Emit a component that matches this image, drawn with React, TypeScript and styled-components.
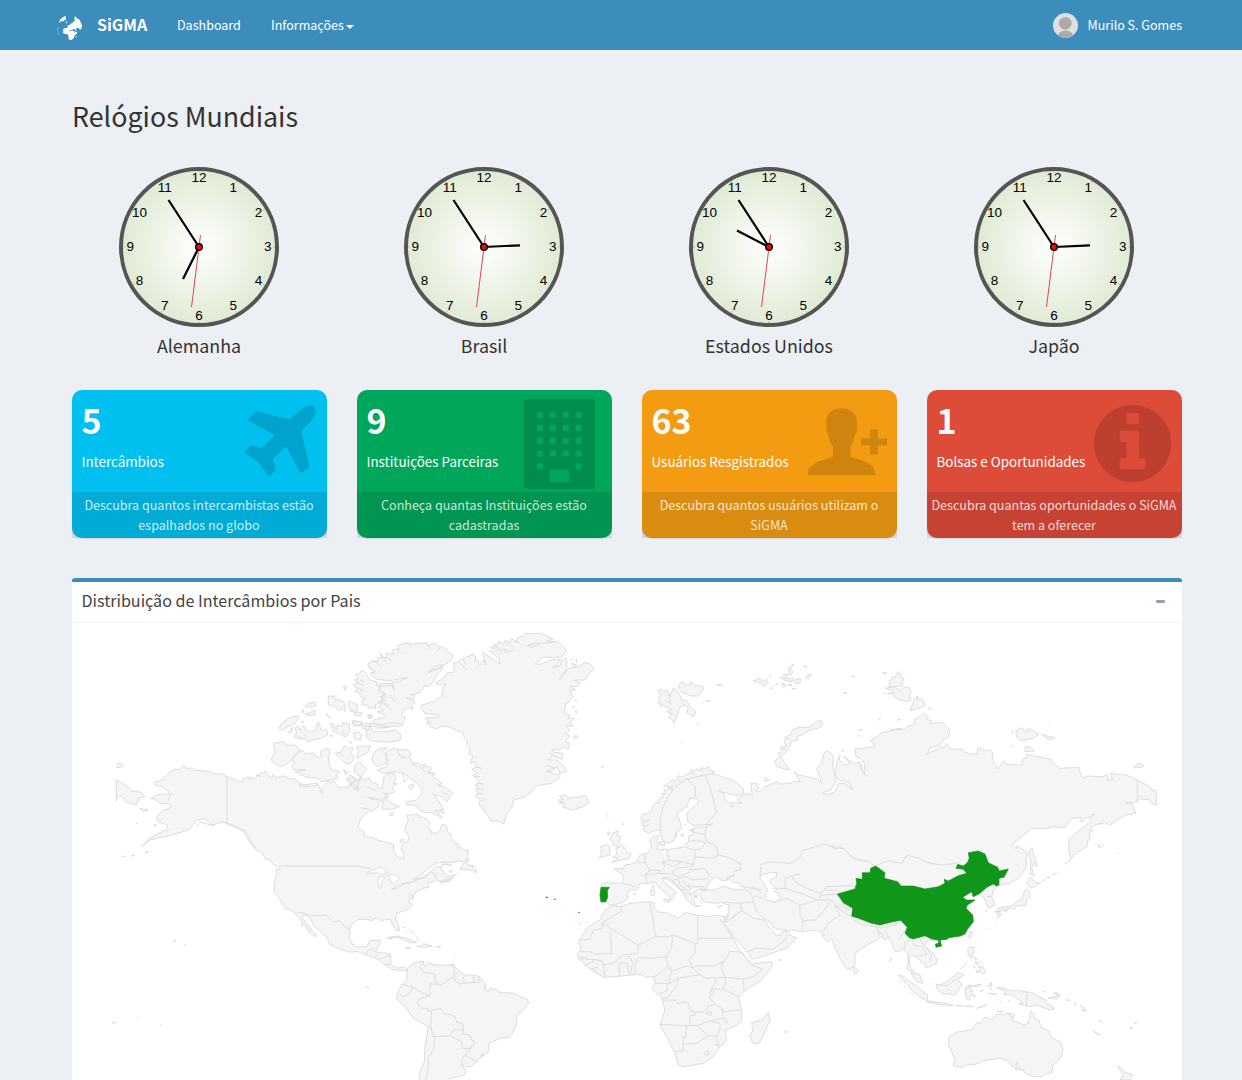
import React from 'react';
import styled, { createGlobalStyle } from 'styled-components';

const GlobalStyle = createGlobalStyle`
  *, *::before, *::after { box-sizing: border-box; }
  html, body { margin: 0; padding: 0; }
  body {
    background: #ecf0f5;
    color: #333;
    font-family: "Source Sans Pro", "Noto Sans CJK JP", "Noto Sans CJK SC", sans-serif;
    overflow: hidden;
  }
`;

const Page = styled.div`
  height: 1080px;
  overflow: hidden;
`;

const Navbar = styled.header`
  display: flex;
  align-items: center;
  height: 50px;
  padding: 0 60px 0 57px;
  background: #3c8dbc;
  color: #fff;
`;

const Brand = styled.a`
  display: flex;
  align-items: center;
  gap: 14px;
  width: 120px;
  font-size: 16px;
  line-height: 20px;
  font-weight: 700;
`;

const BrandName = styled.span`
  padding-bottom: 2px;
`;

const NavLink = styled.a<{ $width?: number }>`
  display: flex;
  align-items: center;
  gap: 2px;
  width: ${(p) => (p.$width ? `${p.$width}px` : 'auto')};
  font-size: 12.54px;
  line-height: 20px;
  white-space: nowrap;
`;

const Caret = styled.span`
  margin-top: 3px;
  border-top: 4px solid #fff;
  border-left: 4px solid transparent;
  border-right: 4px solid transparent;
`;

const UserLink = styled(NavLink)`
  gap: 10px;
  margin-left: auto;
`;

const Content = styled.main`
  padding: 0 60px 0 72px;
`;

const PageTitle = styled.h1`
  margin: 0;
  padding: 49px 0 34px;
  font-size: 26.8px;
  line-height: 34px;
  font-weight: 400;
`;

const Columns = styled.section`
  display: grid;
  grid-template-columns: repeat(4, 1fr);
  gap: 30px;
`;

const ClockCell = styled.figure`
  display: flex;
  flex-direction: column;
  align-items: center;
  margin: 0;
  height: 223px;
`;

const ClockFace = styled.svg`
  display: block;
  font-family: "Liberation Sans", Arial, sans-serif;
  font-size: 13.5px;
  text-anchor: middle;
`;

const ClockLabel = styled.figcaption`
  margin-top: 7px;
  padding-right: 1px;
  font-size: 17.85px;
  line-height: 22px;
`;

const SmallBox = styled.article<{ $color: string }>`
  display: flex;
  flex-direction: column;
  height: 148px;
  border-radius: 10px;
  background: ${(p) => p.$color};
  color: #fff;
  box-shadow: 0 1px 1px rgba(0, 0, 0, 0.1);
`;

const BoxInner = styled.div`
  display: flex;
  justify-content: space-between;
  height: 102px;
  padding: 9px 0 0 9.5px;
`;

const BoxFigures = styled.div`
  white-space: nowrap;
`;

const BoxNumber = styled.h3`
  margin: 0 0 9px;
  font-size: 34px;
  line-height: 42px;
  font-weight: 700;
`;

const BoxLabel = styled.p`
  margin: 0;
  font-size: 13.42px;
  line-height: 22px;
`;

const BoxIcon = styled.svg<{ $top: number; $right: number }>`
  flex: none;
  margin-top: ${(p) => p.$top}px;
  margin-right: ${(p) => p.$right}px;
  margin-left: -20px;
  fill: rgba(0, 0, 0, 0.15);
  overflow: visible;
`;

const BoxFooter = styled.a`
  display: block;
  height: 46px;
  padding: 3px 1px 3px 0;
  background: rgba(0, 0, 0, 0.1);
  color: rgba(255, 255, 255, 0.8);
  font-size: 12.54px;
  line-height: 20px;
  text-align: center;
`;

const Panel = styled.section`
  margin-top: 40px;
  border-top: 4px solid #3c8dbc;
  border-radius: 3px 3px 0 0;
  background: #fff;
`;

const PanelHeader = styled.div`
  display: flex;
  align-items: center;
  justify-content: space-between;
  height: 41px;
  padding: 0 17px 2px 9.5px;
  border-bottom: 1px solid #f4f4f4;
  color: #444;
`;

const PanelTitle = styled.h3`
  margin: 0;
  padding-bottom: 2px;
  font-size: 16.1px;
  line-height: 20px;
  font-weight: 400;
`;

const CollapseMark = styled.span`
  width: 9px;
  height: 3px;
  border-radius: 1px;
  background: #97a0b3;
`;

const PanelBody = styled.div`
  padding: 10px 0 0 40px;
`;

const MapCanvas = styled.svg`
  display: block;
  stroke-linejoin: round;
`;

const LogoMark = styled.svg`
  margin-top: 5px;
`;

const Logo = () => (
  <LogoMark width="26" height="26" viewBox="51 45 78 78" fill="#fff">
    <path d="M105 48l7 8 5 1 6 11 3 10-2 8-4 3-5-6-5 1-2 5 3 5-5-3-4-5-5 3 2 6-6-5-5 1-5-2-6 4-6 1-2-6 6-4 8-1-1-6 7-2 2-4 6-1 4-6 4-2-2-6z" />
    <path d="M69 94l9-5 9 1 5 4 8-1 8 3 4-1-2 7-6 4-3 8-6 6-7-1-3-5 1-7-4-4-9-2-5-3z" />
    <path d="M57 66l4-8 5-4 8-6 4 3-1 5 2 5-6-1-5 5-4-3-7 7zM77 67l4-3 1 4-3 2zM106 112l3-5 1 2-2 4z" />
    <path d="M54 80l-1 10 2 9 4 6" fill="none" stroke="#fff" strokeOpacity=".5" strokeWidth="2" />
  </LogoMark>
);

const Avatar = () => (
  <svg width="25" height="25" viewBox="0 0 25 25">
    <clipPath id="avatar-clip"><circle cx="12.5" cy="12.5" r="12.5" /></clipPath>
    <g clipPath="url(#avatar-clip)">
      <rect width="25" height="25" fill="#e0e0e0" />
      <circle cx="12.3" cy="10.3" r="6.3" fill="#aaa" />
      <ellipse cx="12.5" cy="24" rx="8" ry="6.6" fill="#aaa" />
    </g>
  </svg>
);

const numerals = Array.from({ length: 12 }, (_, i) => i + 1);

function Clock({ name, hour }: { name: string; hour: [number, number] }) {
  return (
    <ClockCell>
      <ClockFace width="161" height="160" viewBox="-80 -80 161 160">
        <defs>
          <radialGradient id="dial">
            <stop offset="0" stopColor="#fff" />
            <stop offset="1" stopColor="#e0ead4" />
          </radialGradient>
        </defs>
        <circle r="78" fill="url(#dial)" stroke="#555" strokeWidth="4" />
        {numerals.map((n) => {
          const a = (n * Math.PI) / 6;
          return (
            <React.Fragment key={n}>
              <line
                x1={Math.sin(a) * 74} y1={-Math.cos(a) * 74}
                x2={Math.sin(a) * 76} y2={-Math.cos(a) * 76}
                stroke="#a9c48c" strokeWidth="1"
              />
              <text x={Math.sin(a) * 68.7} y={-Math.cos(a) * 68.7 + 4}>{n}</text>
            </React.Fragment>
          );
        })}
        <line x2={hour[0]} y2={hour[1]} stroke="#000" strokeWidth="2.2" />
        <line x2="-30.5" y2="-47" stroke="#000" strokeWidth="2.2" />
        <line x1="1.5" y1="-12" x2="-7.5" y2="60" stroke="#e04848" strokeWidth="1" />
        <circle r="3.3" fill="#f00" stroke="#000" strokeWidth="1.4" />
      </ClockFace>
      <ClockLabel>{name}</ClockLabel>
    </ClockCell>
  );
}

const PlaneIcon = () => (
  <BoxIcon width="71" height="71" viewBox="190 126 1412 1412" $top={6} $right={11}>
    <path d="M1568 160q44 52 12 148t-108 172l-161 161 160 696q5 19-12 33l-128 96q-7 6-19 6-4 0-7-1-15-3-21-16l-279-508-259 259 53 194q5 17-8 31l-96 96q-9 9-23 9h-2q-15-2-24-13l-189-252-252-189q-11-7-13-23-1-13 9-25l96-97q9-9 23-9 6 0 8 1l194 53 259-259-508-279q-14-8-17-24-2-16 9-27l128-128q14-13 30-8l665 159 160-160q76-76 172-108t148 12z" />
  </BoxIcon>
);

const square = (x: number, y: number, w = 128, h = 128) =>
  `M${x + 32} ${y}q-32 0-32 32v${h - 64}q0 32 32 32h${w - 64}q32 0 32-32v-${h - 64}q0-32-32-32z`;

const windows = [256, 512, 768, 1024, 1280].flatMap((y) =>
  [256, 512, 768, 1024].filter((x) => y < 1280 || x === 256 || x === 1024).map((x) => square(x, y)),
);

const BuildingIcon = () => (
  <BoxIcon width="70.7" height="90" viewBox="0 0 1408 1792" $top={0} $right={17}>
    <path
      fillRule="evenodd"
      d={`M64 0h1280q64 0 64 64v1664q0 64-64 64H64q-64 0-64-64V64Q0 0 64 0z${windows.join('')}${square(512, 1408, 384, 256)}`}
    />
  </BoxIcon>
);

const PersonAddIcon = () => (
  <BoxIcon width="79" height="68" viewBox="0 0 79 68" $top={9.2} $right={10.2}>
    <path d="M33.4.3C42 .3 49 5 49 13.500c0 2-.4 4 .1 6.500.2 2.500-.5 4.500-1.700 5.600-1 6.200-3 10.500-4.900 13.400v9.500c7 2.800 15.500 4.500 21 9 3.500 2.800 3.700 5 3.700 9.700H0c0-4.700.2-6.900 3.700-9.700 5.500-4.500 14.300-6.200 21.300-9V39c-1.900-2.900-4.200-7.200-5.200-13.400-1.100-1.100-1.600-3.100-1.400-5.600.3-2.500-.1-4.500-.1-6.500C18.300 5 25 .3 33.400.3z" />
    <path d="M62.200 21.500h7.600v9H79v7h-9.200v9h-7.600v-9H53.100v-7h9.100z" />
  </BoxIcon>
);

const InfoIcon = () => (
  <BoxIcon width="77.200" height="77.200" viewBox="128 128 1536 1536" $top={6} $right={11}>
    <path d="M1152 1376v-160q0-14-9-23t-23-9h-96v-512q0-14-9-23t-23-9h-320q-14 0-23 9t-9 23v160q0 14 9 23t23 9h96v320h-96q-14 0-23 9t-9 23v160q0 14 9 23t23 9h448q14 0 23-9t9-23zm-128-896v-160q0-14-9-23t-23-9h-192q-14 0-23 9t-9 23v160q0 14 9 23t23 9h192q14 0 23-9t9-23zm640 416q0 209-103 385.500t-279.500 279.500-385.500 103-385.500-103-279.500-279.500-103-385.500 103-385.500 279.500-279.500 385.500-103 385.500 103 279.500 279.500 103 385.500z" />
  </BoxIcon>
);

/* Map outlines are kept per survey sheet; each sheet has its own origin and unit. */
const sheets: Record<string, [number, number, number]> = {
  P: [0, 0, 1],
  A: [100, 570, 3],
  B: [340, 620, 3],
  C: [590, 640, 3],
  D: [850, 650, 3],
  E: [220, 850, 3],
  F: [540, 840, 3],
  G: [830, 840, 3],
};

function trace(source: string, close: boolean): string {
  let sheet = sheets.P;
  return source
    .split('|')
    .map((part) => {
      const points: string[] = [];
      part.trim().split(/\s+/).forEach((token) => {
        if (sheets[token]) {
          sheet = sheets[token];
          return;
        }
        const [x, y] = token.split(',').map(Number);
        points.push(`${(sheet[0] + x / sheet[2]).toFixed(1)} ${(sheet[1] + y / sheet[2]).toFixed(1)}`);
      });
      return `M${points.join('L')}${close ? 'Z' : ''}`;
    })
    .join('');
}

const land = `
A 190,627 205,610 225,597 240,598 250,586 260,595 275,594 285,601 300,602 325,604 345,611 365,611 381,620 400,627 420,635 428,634 430,622 437,629 443,620 448,629 456,620 462,626 470,620 472,612 478,618 482,608 490,610 495,603 505,617 515,624 520,613 530,624 550,617 565,625 585,627 600,640 598,650 635,648 645,640 655,643 660,655 668,672 658,662 672,650 685,632 692,638 700,632 715,652 745,652 755,640 762,645 768,660 775,635 785,620
B 25,500 30,490 45,510 52,500 60,475 72,480 88,473 97,490 108,488 118,508 127,503 130,490 132,470 140,462 162,460 168,475 160,490 172,492 155,500 165,515 150,522 130,520 148,530 124,534 130,540 118,545 115,560 100,570 85,575 62,595 54,625 70,632 75,650 95,652 115,661 160,673 162,697 175,713 190,715 192,703 183,690 186,672 203,665 208,650 195,635 198,615 205,602 200,585 215,585 230,583 245,592 262,598 270,612 262,620 275,632 273,640 290,638 300,632 305,615 312,612 322,625 325,640 335,645 332,652 345,670 358,672 350,680 365,682 372,690 385,690 382,710
E 735,37 715,33 690,38 655,37 625,55 600,78 580,88 600,85 625,72 645,52 670,48 660,58 672,65 680,80 700,76 710,72 690,88 665,98 657,90 645,92 625,100 626,112 612,114 600,121 588,125 580,140 578,150 574,133 566,135 571,148 565,155 578,165 570,175 550,183 530,190 526,205 533,222 540,240 530,242 518,225 513,210 500,207 485,212 470,203 455,212 440,208 415,208 400,218 390,230 388,260 395,280 410,290 440,290 450,272 482,270 475,290 465,305 490,308 512,312 512,340 520,350 535,355 550,350 562,358 560,366 550,360 535,362 515,357 495,345 475,328 460,322 437,315 415,305 388,306 355,295 328,283 322,263 300,245 285,230 272,208 260,198 250,194 247,205 265,225 275,240 290,255 285,260 265,243 258,228 243,224 246,218 238,205 225,190 212,180 195,175 180,148 162,125 163,95 170,70 166,58 182,60 172,48 160,45 150,30 135,26 128,10 110,0
P 250,843 244,832 233,825 222,822 213,825 205,819 197,820 190,829 182,832 168,836 150,840 141,847 150,838 163,831
A 205,780 200,765 175,755 170,740 190,720 208,717 213,708 205,702 180,700 165,688 152,685 170,675 188,671 205,675 207,665 185,650 165,645 162,637 178,632
| E 562,358 575,343 585,338 610,333 612,345 615,350 628,335 633,342 650,345 690,345 705,350 720,365 735,375 760,375 778,380 795,400 798,415 790,415 805,425 810,415 835,420 840,430 850,427 880,430 905,442 922,448 926,460 908,482 890,495 888,525 875,555 865,562 840,565 807,580 805,605 780,625 765,640 755,650 735,648 725,645 738,662 735,675 690,685 685,710 600,710 597,670 613,635 615,590 625,530 580,505 555,470 530,448 530,435 537,420 545,405 560,390 560,370
| B 340,130 355,125 370,115 400,103 408,110 405,125 415,122 418,137 430,120 438,134 428,97 455,115 480,132 476,115 448,93 468,95 475,105 485,100 470,90 450,82 468,80 480,88 460,75 478,72 475,65 492,72 495,60 510,68 515,56 530,66 530,55 550,47 555,40 575,41 600,40 620,48 640,58 620,63 655,65 680,92 665,112 640,112 610,112 585,132 600,133 640,118 660,120 650,135 637,142 660,137 665,120 680,115 680,145 658,180 685,145 715,140 735,127 750,132 763,147 745,162 735,180 700,181 722,190 710,200 690,198 708,210 690,210 698,230 685,248 678,250 672,280 690,285 685,295 703,295 690,305 700,320 680,315 688,332 675,340 690,348 675,365 690,370 685,388 670,380 655,390 635,390 640,397 670,400 665,418 640,405 625,420 650,420 670,435 680,455 660,460 650,440 620,455 660,465 660,472 635,490 590,497 575,515 555,530 520,540 515,565 500,580 495,600 490,613 482,604 475,607 470,601 455,606 445,590 430,570 425,558 417,556 420,540 405,528 418,520 406,510 415,500 405,495 418,485 398,465 412,460 395,448 412,440 405,425 390,430 398,410 385,400 390,385 380,375 382,362 373,355 370,340 360,335 325,320 305,318 290,328 270,320 260,305 275,310 255,295 297,290 297,284 255,280 242,262 245,255 280,245 305,230 310,200 318,193 290,193 288,188 310,175 320,160 343,155 343,140
| B 655,548 670,547 655,540 670,538 658,528 678,525 685,535 700,530 718,532 735,525 747,545 735,558 700,570 670,562 675,552
| B 83,133 100,122 115,124 112,112 125,115 120,98 132,112 140,115 140,100 158,102 160,88 175,88 172,78 185,72 205,68 220,73 238,68 250,72 262,66 260,75 285,70 300,82 310,80 322,92 340,105 335,118 325,128 300,140 265,158 310,140 305,150 290,165 280,185 265,200 255,195 240,218 210,225 225,225 220,240 200,233 225,245 215,255 220,268 205,262 190,270 185,285 197,293 185,318 150,320 115,318 90,320 100,300 135,290 130,282 112,275 130,272 115,260 125,250 115,245 135,240 120,230 135,225 118,215 118,192 150,190 165,212 155,188 175,185 205,172 150,182 110,178 90,160 108,155 88,145
| B 65,150 78,160 83,172 90,180 112,187 110,195 122,200 118,215 135,220 140,230 125,235 130,243 105,255 108,265 85,262 80,255 65,255 68,240 78,235 60,230 60,218 45,215 52,205 40,195 55,190 43,180 55,175 45,165 60,160
| B 75,318 90,320 100,335 140,335 165,330 185,345 180,360 145,367 90,362 78,350 80,335
| B 130,383 140,383 130,395 140,410 140,430 112,440 97,425 98,405 110,390
| B 140,395 160,385 172,388 180,410 200,415 175,402 172,388 205,390 215,405 205,410 220,425 218,432 235,428 240,436 255,432 248,442 262,438 275,445 265,455 285,460 280,470 292,478 305,490 295,495 310,500 320,505 338,520 330,530 320,545 305,530 285,525 280,520 300,550 312,570 300,570 315,580 285,570 305,590 310,595 280,580 245,575 225,555 200,555 197,545 230,540 245,520 245,505 230,490 205,470 190,460 165,455 130,460 112,450 140,440 145,425 138,410
| B 205,498 220,492 222,502 210,507 | B 150,578 160,577 158,587 149,586 | B 125,568 128,550 137,530 150,548 178,560 160,567 | B 180,660 190,658 190,664 182,667
| B 360,748 375,725 387,715 382,732 400,740 395,735 410,750 403,758 410,755 395,750 378,748 | E 677,88 700,82 690,93 665,98 657,95 | E 690,60 697,65 692,68 | E 665,43 680,42 695,46
| A 520,520 550,515 560,525 585,525 600,540 575,570 555,585 540,590 512,570 525,545
| A 575,570 590,550 605,540 620,552 640,548 655,565 665,560 660,545 680,535 690,540 685,565 690,595 700,600 720,605 708,615 715,625 665,635 650,625 620,622 605,615 585,605 618,600 580,598 575,585 585,575
| A 580,500 590,490 585,475 595,468 598,480 610,466 622,483 635,485 650,480 650,460 657,457 663,480 680,480 683,495 660,505 640,510 625,517 615,505 600,507
| A 537,475 545,460 560,450 575,440 597,438 593,448 585,460 560,472 545,482 | A 565,487 580,470 572,490
| A 615,410 625,400 645,397 648,408 620,412 | A 605,420 612,420 610,428 | A 615,430 625,430 645,420 645,435 620,437
| A 685,378 703,378 705,390 718,388 735,400 735,425 725,415 720,422 700,405 690,408 685,400 | A 745,395 755,395 772,405 772,422 752,425 | A 762,428 785,428 783,437 765,437
| A 678,430 692,445 683,440 | A 690,460 700,462 710,480 712,465 725,470 728,458 748,462 750,485 737,503 725,495 715,490 700,485 698,475
| A 760,490 775,485 785,495 783,510 765,508 | A 757,452 785,455 783,468 760,465 | A 785,462 812,460 805,480 788,475 | A 730,352 740,348 735,362 | A 805,435 818,437 808,445
| A 690,495 697,498 693,501 | A 603,455 612,455 608,459 | A 748,514 756,518 750,520 | A 730,600 745,605 738,615 | A 745,628 760,622 765,632 752,640 | A 772,648 780,655 774,662
| B 50,378 92,378 85,395 75,402 50,415 55,395 | B 45,435 60,425 80,445 70,462 60,470 42,455 | B 18,480 30,465 50,478 38,490 | B 83,285 95,285 98,292 87,296 | B 38,305 65,305 62,315 42,318
| A 705,550 725,545 730,530 740,530 745,535 760,535 752,550 762,560 755,578 740,583 730,575 720,565
| A 49,630 75,645 90,655 95,665 105,662 125,668 135,680 115,685 118,692 108,695 110,705 88,700 75,695 72,685 60,678 52,682 49,693
| A 50,583 55,580 65,582 68,590 52,593 | A 118,715 125,716 145,720 130,725 | A 108,760 114,761 | A 163,762 170,766 164,768
| C 155,530 160,520 172,522 185,510 183,504 190,500 198,488 208,490 205,480 220,470 216,460 228,462 222,450 232,450 235,442 245,448 248,438 238,440 220,440 250,418 256,426 262,416 265,407 278,412 285,402 295,404 305,390 312,396 320,386 330,394 335,382 345,388 355,380 358,390 373,395 365,403 385,405 400,412 420,418 440,428 460,445 460,460 440,467 400,457 385,452 402,462 405,480 425,500 432,500 420,488 435,488 455,490 440,478 450,470 470,460 487,465 482,430 500,430 507,445 495,452 510,455 525,440 560,425 570,432 600,430 610,425 630,425 612,395 625,405 655,410 685,420 695,430 680,385 695,370 700,345 706,335 715,333 730,348 728,380 738,425 722,450 698,458 715,465 735,455 745,430 765,430 790,450 775,425 745,420 735,400 740,370 750,345 748,360 765,375 780,370 760,350 795,372 808,365 815,390 830,410 822,395 825,372 810,355 798,350 795,328 840,322
D 75,290 72,278 60,272 75,265 95,248 125,243 150,235 160,240 175,228 192,225 195,207 205,203 220,190 235,200 228,208 245,213 240,222 255,218 280,218 290,230 300,240 295,260 275,275 270,285 235,297 238,303 228,316 245,305 265,298 275,288 280,295 290,280 297,295 310,297 338,298 340,305 360,312 383,312 382,298 388,292 405,303 415,300 430,310 427,325 432,340 445,357 460,333 475,345 495,342 515,346 518,328 530,322 530,313 565,320 605,328 605,337 630,355 685,352 693,375 702,385 710,378 760,380 770,372 775,392 788,388 780,370 830,375 862,390 900,410 908,422 920,422 920,465 905,460 895,448 875,449 872,436 862,455 825,460 845,460 858,490 830,495 800,510 780,525 765,518 735,525 725,530 720,545 718,570 712,572 712,588 695,600 680,607 662,627 655,590 658,565 690,540 720,515 720,510 725,495 735,492 710,505 695,517 692,502 665,505 645,533 605,530 595,535 545,535 485,585 500,597 500,588 530,605 528,655 500,690
G 555,120 540,130 510,135 490,150 485,170 495,195 475,205 465,180 455,165 445,165 430,170 425,155 395,170 410,185 435,180 412,195 408,205 430,235 430,245 410,275 390,290 355,293 330,302 295,300 282,315 305,335 322,355 320,370 290,383 285,380 290,375 270,362 260,350 240,345 238,375 250,395 270,405 278,430 260,425 245,405 243,392 230,388 235,370 232,340 220,325 205,335 195,335 185,310 175,290 165,300 155,290 145,298 120,310 75,340 75,375 65,385 50,388 30,355 10,310 5,295
F 865,305 845,288 855,285 830,270 785,275 755,270 740,275 730,270 712,267 700,262 690,245 670,235 675,245 690,265 700,275 705,285 720,285 735,268 740,282 770,293 755,310 740,325 715,333 665,350 635,358 625,340 600,310 580,290 560,260 553,250 557,230 565,220 565,200 572,188 555,187 530,190 500,187 485,180 480,165 485,155 500,150 490,143 465,155 475,165 465,175 460,160 450,160 455,170 465,190 458,195 450,185 440,180 432,165 425,155 410,140 385,120 375,115 365,115 375,130 395,145 410,160 400,162 403,172 393,180 385,165 360,145 345,125 325,130 300,130 290,150 270,150 260,165 265,175 250,185 225,195 210,195 200,187 183,185 180,165 185,140 183,133 195,128 250,130 248,105 222,85 240,85 250,88 253,76 275,72 290,65 300,45 320,40
C 185,625 180,600 190,590 208,587 198,605 208,610 200,628 235,628 280,622 295,605 297,585 310,585 312,575 300,570 318,562 350,560 368,552 310,557 293,545 290,520 325,487 322,475 300,475 290,500 260,520 270,545 275,565 260,575 250,605 230,610 215,595 210,570 195,570 175,580 158,568 165,560 153,552 165,545 153,540
| C 210,605 222,603 224,615 213,618 | C 272,585 282,583 275,590 | C 255,590 262,580 258,592 | C 300,570 312,568 308,578 | C 282,553 288,555
| F 215,197 240,200 270,190 330,185 345,190 340,200 355,215 385,220 415,235 428,222 440,218 470,225 510,230 530,225 555,230 553,248 540,238 580,295 595,325 620,355 635,372 695,365 697,378 665,420 610,455 595,475 605,510 605,545 590,557 555,570 560,600 540,620 515,655 490,670 430,680 415,675 405,640 385,600 360,555 375,510 365,475 335,445 345,430 340,410 315,412 300,402 270,405 230,410 190,412 155,390 135,375 115,355 112,343 122,330 117,300 145,260 180,240 195,210
| F 685,518 690,540 675,575 660,608 640,612 630,590 638,570 635,548 665,540
| C 60,600 68,580 85,572 80,588 95,588 85,605 100,618 110,635 123,642 118,655 95,660 65,667 85,655 68,652 80,643 78,625 90,622 70,615 70,605 | C 30,635 38,630 32,620 50,613 60,620 58,645 25,655 35,645 | C 52,578 60,575 56,588 | C 50,526 54,530 | C 100,550 101,556
| C 203,152 215,148 222,155 232,150 240,170 250,143 270,165 275,180 290,182 300,200 318,215 310,230 290,218 295,205 285,195 270,200 252,250 245,238 235,230 245,222 230,215 245,208 215,195 205,180 212,165
| C 270,130 280,125 285,135 302,135 300,125 315,135 340,140 340,150 325,168 305,168 290,163 275,155 265,145 | C 380,135 395,133 390,137 | C 347,183 362,183 | C 203,187 215,202 | C 337,186 338,190 | C 322,256 328,250
| C 490,122 510,115 518,125 530,118 535,130 520,140 512,130 | C 538,102 542,110 | C 570,115 585,102 600,105 610,95 600,85 612,75 595,85 598,100 580,120 608,125 610,115 | C 615,120 632,115 630,130 615,130 | C 645,112 662,100 660,112 650,118 | C 605,145 618,147 | C 640,78 650,80 | C 760,158 770,160 | C 785,108 795,110 | C 575,130 590,135 580,142 | C 600,130 605,137 595,136 | C 540,145 548,144 | C 555,135 565,130 | C 605,72 610,76
| C 575,385 562,380 552,365 570,350 565,340 578,335 570,322 590,318 582,308 588,290 605,282 605,272 625,262 655,262 685,242 695,242 697,255 685,265 655,272 640,283 620,290 625,300 605,303 600,320 590,335 575,350 582,365 600,390 | C 522,418 530,412 537,420 527,425 | C 806,270 816,271 | C 806,285 808,290 | C 755,330 762,334
| D 118,110 118,98 128,80 135,82 145,65 150,68 152,80 163,88 155,95 158,108 | D 105,115 132,110 150,122 160,112 175,112 184,122 178,135 182,150 175,155 145,148 132,140 130,122 | D 180,182 195,145 203,138 202,152 212,143 227,165 215,172 | D 235,173 245,178 | D 98,67 110,68 104,73 | D 103,130 107,131 | D 113,133 120,127 130,130 | D 85,210 93,204 | D 142,210 152,208 | D 120,240 155,236
| D 497,245 512,233 530,248 535,235 567,252 550,265 512,272 500,260 | D 575,252 590,258 615,262 608,268 590,267 | D 525,290 540,290 552,303 525,305 | D 853,353 860,343 870,340 882,348 870,352 | D 485,243 488,250 | D 598,219 601,218 | D 485,286 490,290
| D 535,610 545,593 550,610 563,650 552,640 545,655 552,677 540,672 543,635 | D 575,693 585,688 | D 590,685 600,680 | D 608,676 616,670 | D 623,670 626,667 | D 645,643 652,636 | D 654,633 660,630 | D 724,543 730,540 | D 743,584 750,588 | D 756,588 760,590 | D 803,608 805,609
| G 590,130 600,112 618,128 632,128 605,145 597,138 | G 585,150 597,150 600,168 590,180 588,195 560,198 552,207 540,205 520,212 500,215 508,205 545,197 555,190 565,182 575,178 | G 493,215 508,213 512,225 503,235 505,220 | G 520,210 535,208 528,216 | G 477,266 480,264 | G 492,251 495,249 | G 465,213 470,212
| G 415,290 420,275 428,276 421,294 | G 413,325 418,320 433,322 430,340 422,342 430,352 415,347 | G 438,392 450,390 458,378 467,398 460,403 452,395 440,398 | G 435,365 445,368 440,375 | G 450,362 458,372 | G 390,390 412,368 | G 432,352 442,357 438,361 | G 420,352 426,358 | G 445,378 452,381 447,385 | G 430,375 436,385
| G 318,433 330,435 350,425 375,405 385,398 403,405 385,418 395,435 375,465 355,462 335,460 322,448
| G 203,405 218,408 240,425 260,438 280,455 292,465 292,482 275,475 250,455 235,438 220,420 | G 288,482 330,488 352,490 370,497 330,494 292,487 | G 378,497 400,497 | G 405,498 430,500 | G 440,505 470,495 | G 222,437 226,441 | G 210,424 214,426 | G 244,460 248,463 | G 310,415 312,416
| G 405,450 415,435 430,437 455,432 448,438 415,442 430,452 420,455 437,470 420,465 418,480 410,478 | G 478,430 485,428 482,440 | G 475,460 500,462 | G 472,438 488,436 | G 450,453 460,452 | G 480,448 486,444 | G 510,490 513,485 | G 535,480 537,484 | G 520,462 530,465 | G 500,514 520,516 | G 470,414 472,416
| G 500,443 520,443 535,450 550,452 570,452 610,460 635,475 645,478 650,490 675,505 660,510 620,495 600,500 565,492 580,490 560,475 545,465 520,462 530,455 | G 655,475 690,465 680,477 | G 670,458 684,460 692,470 | G 640,454 646,455 | G 708,478 720,483 | G 730,488 740,495 | G 750,495 762,505 | G 755,508 762,516 770,511 | G 788,573 812,587 | G 808,540 817,548 | G 900,560 908,563 904,568 | G 912,550 922,547
| G 355,615 357,590 385,575 425,570 440,548 450,550 465,530 480,537 490,537 500,522 525,525 530,518 555,525 545,540 582,555 595,550 603,512 610,518 615,538 628,542 632,562 655,572 665,592 693,608 698,632 690,655 668,678 665,700 650,700 635,710 610,710 585,700 580,690 555,688 565,665 548,682 540,665 510,655 460,662 440,672 410,675 395,682 370,677 375,657
| G 862,678 875,685 885,697 910,705 900,720 870,720 880,702 | G 70,380 87,393 77,403 70,395 | G 180,365 184,352
| E 500,265 515,260 530,258 560,265 590,278 565,278 550,268 530,262 | E 590,288 605,288 610,281 637,288 610,292 | E 555,291 571,294 560,296 | E 650,290 662,291 | E 690,345 700,342 702,348 | E 440,410 447,415 | E 550,232 556,233 | E 570,240 580,250 | E 510,267 516,267 | E 556,246 558,248 | E 583,256 586,258 | E 588,262 592,265 | E 595,271 598,272 | E 701,316 704,317
| F 370,177 392,178 388,187 372,182 | F 333,150 343,150 344,165 333,167 | F 337,138 341,137 341,147 | F 280,162 288,163 | F 463,197 482,199 | F 533,202 548,197 | F 715,360 725,360 | F 118,250 122,250 | F 138,250 144,247 | F 465,168 472,172 | F 480,186 484,188 | F 733,580 735,581 | F 749,575 751,574
| P 122,857 125,856 | P 131,856 135,855 | P 145,853 149,851 | P 1098,846 1101,848 | P 1117,853 1118,853 | P 601,768 604,766 | P 173,940 176,941 | P 184,944 186,946 | P 112,1023 116,1022 | P 785,1032 788,1032 | P 682,742 683,742
| P 137,1016 138,1017 | P 160,1025 161,1025
| B 693,117 696,122 | B 708,117 710,128 | B 694,130 710,135 705,141 | B 707,238 709,244 | B 697,262 705,262 | B 708,270 709,280 | B 700,350 710,346 712,354 703,355
`;

const waters = `
F 500,140 515,118 530,110 545,122 565,120 560,112 585,105 565,115 578,128 600,130 617,148 585,150 550,138 525,150 503,150
| F 663,105 690,98 712,98 708,112 690,120 693,132 710,145 705,155 715,160 720,180 705,187 680,180 675,165 683,150 670,130 660,115
| E 440,70 455,60 465,60 475,50 500,60 500,72 480,72 475,68
| E 478,115 473,90 480,80 495,82 485,95 485,112 | E 505,75 530,75 540,85 525,100 515,100 510,85 | E 515,118 530,108 550,103 535,113 | E 548,100 572,97 570,101
| A 600,642 618,644 650,640 655,645 635,648 612,648
`;

const borders = `
A 381,620 381,762 400,770 435,782 E 110,0 | E 178,48 413,48 450,56 | E 572,97 600,86 615,84 632,66 645,70 650,90
| E 225,190 245,187 272,198 318,195 340,215 360,212 375,232 390,238 | E 437,315 445,300 460,295 460,307 | E 465,320 478,312 | E 475,328 512,315 | E 492,343 512,343
| E 612,333 600,350 610,367 645,372 645,388 652,403 665,405 683,390 700,380 705,350 | E 720,362 705,375 702,385 715,402 745,398 775,397 778,380 | E 735,375 728,388 735,398 | E 762,375 760,397
| E 652,403 630,402 630,438 605,427 580,412 545,403 | E 580,412 570,428 548,442 537,430 | E 630,438 600,445 592,460 605,475 622,475 625,483 640,482 662,475 670,488 705,500 710,517 728,520 730,540 700,540 690,557 655,560 640,560 632,528 635,485
| E 690,557 725,575 727,595 750,595 765,577 755,570 748,555 730,552 730,540 | E 645,560 640,598 625,625 625,650 618,690 | E 765,580 735,615 725,630 727,647 | E 735,615 770,635 | E 625,530 632,528 | E 780,618 790,612 785,622
| F 245,200 245,213 210,235 187,247 187,265 160,270 150,298 117,300 | F 187,250 295,316 345,290 385,290 400,285 465,310 473,310 473,225 | F 210,275 215,340 165,343 | F 330,185 333,210 340,235 343,275 350,290 | F 473,295 578,295
| F 465,310 465,340 448,360 460,385 440,378 395,393 | F 397,290 395,325 378,350 330,355 295,353 285,375 285,402 | F 295,316 293,340 250,345 220,370 190,375 | F 378,350 385,375 360,400 342,410 | F 265,348 278,365 272,402 | F 262,370 238,370 238,408 | F 262,370 268,402 | F 190,375 195,412 | F 118,335 150,335 165,343 | F 115,355 150,358 185,362 192,380 | F 135,375 160,365 | F 150,388 175,380 | F 118,351 142,351 | F 170,400 160,385
| F 385,375 395,395 388,412 390,430 345,430 | F 460,385 480,405 440,410 415,415 390,430 | F 465,378 520,378 548,365 543,375 | F 480,405 500,415 555,412 545,390 545,375 570,335 600,335 625,360 625,368 | F 635,375 668,388 640,410 610,418 555,412 | F 610,418 612,450 | F 555,412 557,430 550,447 598,472 | F 528,415 525,430 512,450 510,475 525,492 545,505 548,515 605,510 | F 515,448 550,447 | F 415,415 408,440 385,470 365,475 | F 382,432 382,452 358,462 | F 368,480 405,480 413,492 430,485 445,490 450,513 465,515 465,525 450,527 450,553 | F 465,518 490,515 510,528 515,520 500,512 505,498 525,495 | F 360,553 450,557 470,557 510,543 540,550 540,570 530,588 505,587 470,557 | F 440,557 437,590 430,592 430,632 405,635 | F 435,612 470,610 505,587 | F 530,588 530,600 540,620 | F 545,505 550,530 565,545 557,550 550,535 510,543 | F 490,640 505,633 508,640 497,647 490,640 | F 525,615 532,612 533,622 | F 512,455 522,455 518,465 510,465
| F 572,188 600,190 640,185 635,165 620,152 | F 600,190 605,212 570,238 553,250 | F 605,212 640,235 670,240 | F 640,185 650,215 672,235 | F 640,168 668,175 | F 625,335 645,325 700,328 735,300 740,285 | F 625,150 640,140 665,160 | F 550,190 568,195 | F 565,222 560,240 | F 600,138 665,150
| F 700,187 740,175 780,195 780,225 790,240 785,272 | F 790,242 825,240 850,215 870,185 | F 780,195 800,190 830,180 870,180 885,190 | F 850,275 865,250 900,225 880,195 G 70,235
| F 697,145 735,145 765,155 785,160 830,180 | F 660,75 685,65 720,68 750,70 782,52 785,32 855,12 885,25 910,25 940,55 985,65 | F 662,80 660,105 | F 735,145 735,115 757,108 765,125 800,145 840,160 860,140 925,137 948,138 | F 850,150 895,150 | F 840,165 890,162 | F 845,165 835,180 | F 758,108 775,102 780,104
| F 885,192 912,218 | F 893,190 922,215 | F 902,190 930,213 | F 912,195 932,210 | G 178,256 188,248 | G 188,256 197,248 | G 197,256 206,248
| G 0,15 40,25 75,58 115,65 135,78 175,62 215,70 232,45 265,55 300,70 340,75 385,68 | G 70,240 100,255 150,262 | G 150,255 150,265 185,258 212,243 | G 140,262 150,290 | G 165,270 175,290 | G 205,300 232,262 | G 225,325 222,310 245,300 | G 250,298 250,315 275,320 290,345 265,348 | G 270,300 305,345 300,365 | G 470,170 485,170 | G 245,398 258,405 | G 330,435 350,438 375,420 388,410 | G 590,455 590,498 | G 450,155 475,142
| C 213,570 210,540 220,500 240,460 270,430 290,415 315,440 317,470 | C 290,418 330,408 345,405 360,440 372,490 380,515 352,550 | C 345,405 373,400 | C 348,560 345,585 350,605 378,618 385,645 370,655 315,650 315,630 285,622 | C 315,578 345,583 | C 297,605 320,600 345,608 335,625 315,630
| C 232,630 237,660 275,665 310,675 315,650 | C 385,645 415,652 452,672 450,690 430,695 | C 310,675 300,690 345,685 360,710 | C 165,640 165,665 178,690 215,692 225,680 218,665 237,660 | C 215,665 250,680 275,665 | C 178,690 170,705 205,700 245,702 258,685 300,680 | C 245,702 265,710 300,695 | C 250,720 285,710 310,720 355,715 | C 280,720 290,740 345,740 | C 300,750 295,730 | C 140,665 165,670 | C 165,700 170,728 | C 100,730 135,740 | C 245,720 290,765 | C 220,712 240,715 262,735 | C 262,710 270,735 285,745 | C 275,750 290,748 300,765 | C 330,750 345,748
| A 832,665 800,650 | A 805,682 840,690 | B 80,530 105,540 | B 60,563 90,568 | B 355,125 380,150 | B 370,120 378,135 | B 560,78 585,70 640,68 | B 118,200 160,195 | D 862,390 862,455
| B 490,85 510,95 520,90 | B 500,70 520,82 | B 520,62 540,70 | B 565,75 575,82 600,72 | B 480,88 505,100 | B 100,122 118,135 | B 125,108 140,128 | B 140,112 155,122 | B 172,88 185,100 | B 200,70 215,82 | B 262,75 275,88 | B 300,85 292,92 | B 265,155 290,137 310,135 | B 150,225 165,245 | B 130,250 155,270 | B 55,190 70,195 | B 50,205 70,212 | B 60,180 72,185 | B 115,245 150,255 | B 405,440 425,445 | B 400,470 420,470 | B 410,490 430,492 | B 408,505 430,508 | B 410,520 432,522 | B 420,540 436,540 | B 620,435 645,445 635,455 620,450 | B 630,400 650,415 | B 215,430 232,440 | B 240,440 255,455 | B 262,455 280,465 | B 290,490 305,500 | B 305,515 325,525 | B 190,460 192,485 205,475 | B 100,310 130,315 150,308 190,312 | B 105,325 150,322
| A 215,670 205,690 | A 470,614 482,622 | A 440,622 455,626 | A 590,495 605,505 | A 600,480 620,500 | A 718,545 730,560 | A 725,480 735,495 | A 290,770 300,755 320,762 345,768
| C 240,440 248,450 | C 262,415 272,425 | C 300,395 315,405 | C 330,385 340,395 | C 165,545 180,540 | C 160,560 175,555 | C 235,160 242,195 | C 225,180 240,190 | C 235,215 252,225 | C 590,295 600,300 | C 575,325 590,330 | C 760,350 775,358 | C 812,370 820,400
| G 402,440 412,450 | G 500,205 520,200 | G 560,685 572,682 | G 145,275 160,282 | G 155,285 162,292 | G 530,520 550,535
`;

const green = `
G 22,162 75,147 80,130 78,115 97,118 97,98 120,98 122,85 137,78 165,98 163,115 203,125 213,138 250,138 285,147 325,140 345,130 343,118 355,123 385,107 410,100 400,88 378,85 383,73 400,78 412,68 418,55 415,38 445,33 465,42 475,68 503,82 508,93 535,87 522,112 507,115 507,135 498,138 490,132 470,142 450,160 430,170 425,155 398,172 410,180 435,180 412,195 408,205 428,225 430,245 412,268 405,282 390,288 355,293 352,298 330,300 335,318 318,322 316,313 327,308 325,300 305,297 285,287 250,297 238,293 225,280 232,262 212,241 185,246 150,255 125,250 85,235 65,228 68,205 40,188
| F 183,142 208,142 202,152 203,170 198,185 183,186 180,165 | F 17,171 24,172 20,174 | F 42,177 46,178 44,180 | F 115,217 119,217 117,219
`;

const WorldMap = () => (
  <MapCanvas width="1045" height="447" viewBox="112 633 1045 447">
    <path d={trace(land, true)} fill="#f5f5f5" stroke="#ddd" strokeWidth="1" />
    <path d={trace(waters, true)} fill="#fff" stroke="#ddd" strokeWidth="1" />
    <path d={trace(borders, false)} fill="none" stroke="#ddd" strokeWidth="1" />
    <path d={trace(green, true)} fill="#109618" stroke="#0e8a16" strokeWidth="0.6" />
  </MapCanvas>
);

const clocks: { name: string; hour: [number, number] }[] = [
  { name: 'Alemanha', hour: [-16, 32] },
  { name: 'Brasil', hour: [36, -1.7] },
  { name: 'Estados Unidos', hour: [-32, -16.5] },
  { name: 'Japão', hour: [36, -1.7] },
];

const boxes = [
  { total: 5, label: 'Intercâmbios', color: '#00c0ef', Icon: PlaneIcon, note: 'Descubra quantos intercambistas estão espalhados no globo' },
  { total: 9, label: 'Instituições Parceiras', color: '#00a65a', Icon: BuildingIcon, note: 'Conheça quantas Instituições estão cadastradas' },
  { total: 63, label: 'Usuários Resgistrados', color: '#f39c12', Icon: PersonAddIcon, note: 'Descubra quantos usuários utilizam o SiGMA' },
  { total: 1, label: 'Bolsas e Oportunidades', color: '#dd4b39', Icon: InfoIcon, note: 'Descubra quantas oportunidades o SiGMA tem a oferecer' },
];

export default function App() {
  return (
    <Page>
      <GlobalStyle />
      <Navbar>
        <Brand><Logo /><BrandName>SiGMA</BrandName></Brand>
        <NavLink $width={94}>Dashboard</NavLink>
        <NavLink>Informações<Caret /></NavLink>
        <UserLink><Avatar />Murilo S. Gomes</UserLink>
      </Navbar>
      <Content>
        <PageTitle>Relógios Mundiais</PageTitle>
        <Columns>
          {clocks.map((c) => <Clock key={c.name} {...c} />)}
        </Columns>
        <Columns>
          {boxes.map(({ total, label, color, Icon, note }) => (
            <SmallBox key={label} $color={color}>
              <BoxInner>
                <BoxFigures>
                  <BoxNumber>{total}</BoxNumber>
                  <BoxLabel>{label}</BoxLabel>
                </BoxFigures>
                <Icon />
              </BoxInner>
              <BoxFooter>{note}</BoxFooter>
            </SmallBox>
          ))}
        </Columns>
        <Panel>
          <PanelHeader>
            <PanelTitle>Distribuição de Intercâmbios por Pais</PanelTitle>
            <CollapseMark />
          </PanelHeader>
          <PanelBody><WorldMap /></PanelBody>
        </Panel>
      </Content>
    </Page>
  );
}
